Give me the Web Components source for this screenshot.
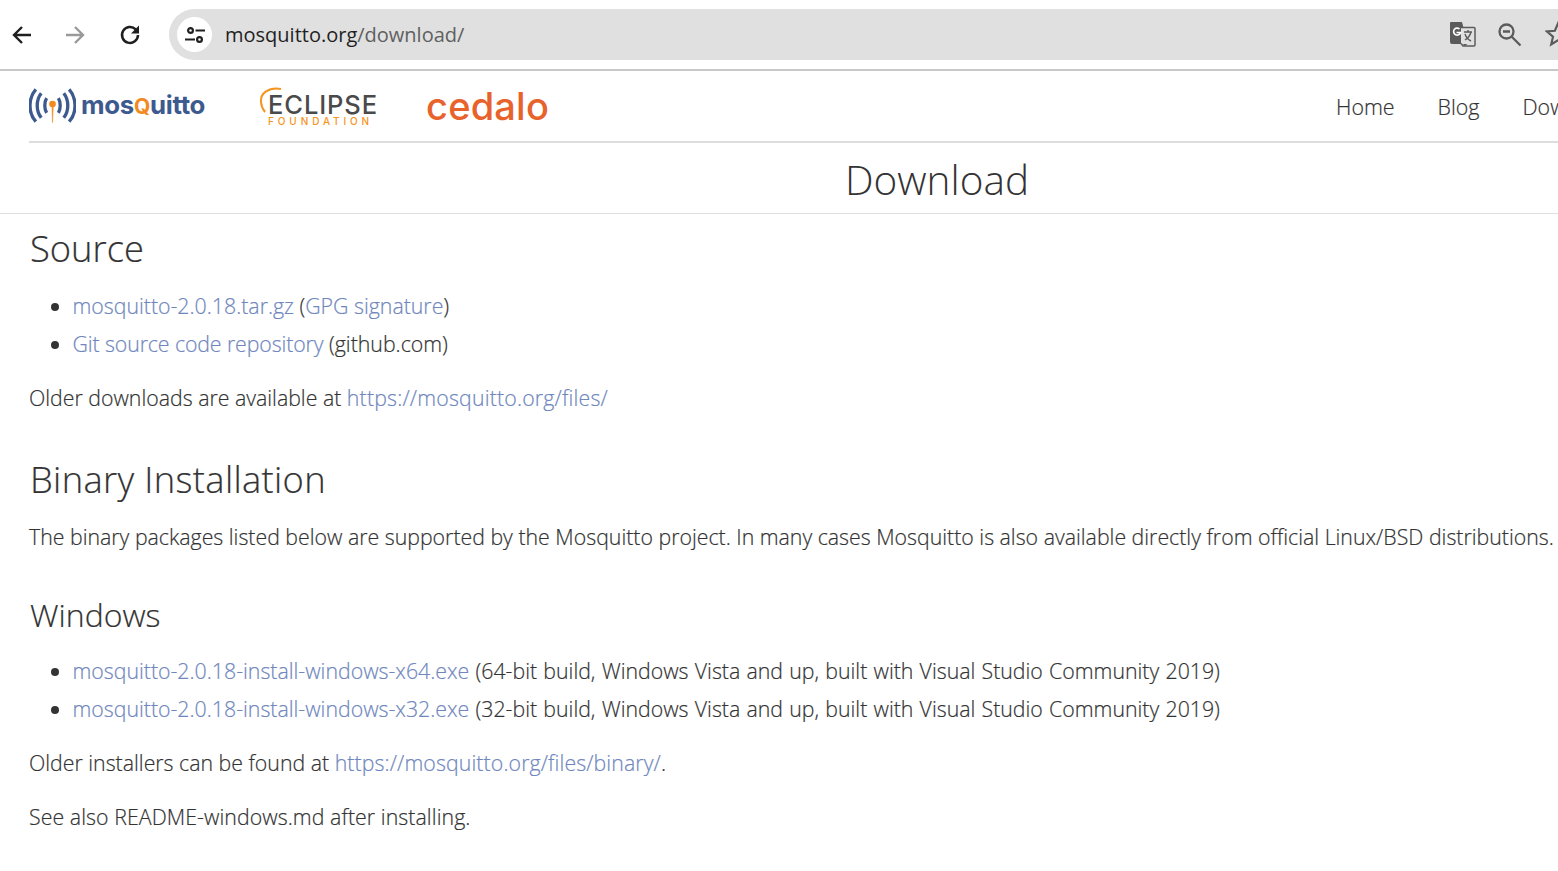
<!DOCTYPE html>
<html><head><meta charset="utf-8"><title>Download</title>
<style>
html,body{margin:0;padding:0;height:871px;overflow:hidden;background:#fff}
body{font-family:"Open Sans","Noto Sans",sans-serif;font-weight:300;color:#333}
</style></head><body>
<browser-bar></browser-bar>
<site-page>
<site-header></site-header>
<page-title>Download</page-title>
<page-content>
<h2>Source</h2>
<ul>
<li><a>mosquitto-2.0.18.tar.gz</a> (<a>GPG signature</a>)</li>
<li><a class="t">Git source code repository</a> (github.com)</li>
</ul>
<p>Older downloads are available at <a class="l">https://mosquitto.org/files/</a></p>
<h2 class="b">Binary Installation</h2>
<p class="nw">The binary packages listed below are supported by the Mosquitto project. In many cases Mosquitto is also available directly from official Linux/BSD distributions.</p>
<h3>Windows</h3>
<ul class="w">
<li><a>mosquitto-2.0.18-install-windows-x64.exe</a> (64-bit build, Windows Vista and up, built with Visual Studio Community 2019)</li>
<li><a>mosquitto-2.0.18-install-windows-x32.exe</a> (32-bit build, Windows Vista and up, built with Visual Studio Community 2019)</li>
</ul>
<p>Older installers can be found at <a class="l2">https://mosquitto.org/files/binary/</a>.</p>
<p class="s">See also README-windows.md after installing.</p>
</page-content>
</site-page>
<script>
function def(name,html){customElements.define(name,class extends HTMLElement{constructor(){super();this.attachShadow({mode:'open'}).innerHTML=html}})}
def('browser-bar',`<style>
:host{display:flex;align-items:center;height:69px;background:#fff;position:relative;overflow:hidden;width:1558px;font-family:"Open Sans",sans-serif}
.nav{display:flex;align-items:center;padding-left:10px;width:169px;box-sizing:border-box;flex:none}
.nav svg+svg{margin-left:29px}
.nav svg:last-child{margin-left:31px}
svg{display:block;flex:none}
.omni{flex:none;width:1500px;height:51px;border-radius:26px;background:#e0e0e0;display:flex;align-items:center;padding-left:8px;box-sizing:border-box}
.chip{width:35px;height:35px;border-radius:50%;background:#fff;display:flex;align-items:center;justify-content:center;flex:none}
.url{margin-left:13px;font:400 20px "Open Sans",sans-serif;color:#1f1f1f;width:1200px;flex:none}
.url span{color:#5f5f5f}
.a{position:absolute}
</style>
<div class="nav">
<svg width="24" height="24" viewBox="0 0 24 24" fill="none" stroke="#1f1f1f" stroke-width="2.400"><path d="M21 12H4M12 4l-8 8 8 8"/></svg>
<svg width="24" height="24" viewBox="0 0 24 24" fill="none" stroke="#9a9a9a" stroke-width="2.400"><path d="M3 12h17M12 4l8 8-8 8"/></svg>
<svg width="24" height="24" viewBox="0 0 24 24" fill="none" stroke="#1f1f1f" stroke-width="2.500"><path d="M20 12a8 8 0 1 1-2.300-5.700L20 8.500"/><path d="M21 2.500v8h-8z" stroke="none" fill="#1f1f1f"/></svg>
</div>
<div class="omni"><div class="chip"><svg width="24" height="24" viewBox="0 0 24 24" fill="none" stroke="#1f1f1f" stroke-width="2.200"><circle cx="7.500" cy="7.500" r="2.400"/><path d="M12.500 7.500H22M2 16.500h10"/><circle cx="16.500" cy="16.500" r="2.400"/></svg></div>
<div class="url">mosquitto.org<span>/download/</span></div></div>
<div class="a" style="left:1449px;top:21px"><svg width="27" height="27" viewBox="0 0 27 27"><path d="M1 2a1 1 0 0 1 1-1h11l6 22H3a2 2 0 0 1-2-2z" fill="#5b5b5b"/><path d="M12 6.500h13a1 1 0 0 1 1 1V24a1 1 0 0 1-1 1H14l-2-2.500" fill="#e0e0e0" stroke="#5b5b5b" stroke-width="1.500"/><path d="M14 23l1.500 2 3-2z" fill="#5b5b5b"/><path d="M15 11h8M19 9v2M22 11c-1 4-3 6-6 8M16 13c1 3 4 6 6 7" fill="none" stroke="#5b5b5b" stroke-width="1.400"/><path d="M10.500 8a3.500 3.500 0 1 0 1 3.500H7.500" fill="none" stroke="#fff" stroke-width="1.700"/></svg></div>
<div class="a" style="left:1497px;top:22px"><svg width="25" height="25" viewBox="0 0 25 25" fill="none" stroke="#5b5b5b" stroke-width="2.300"><circle cx="9.500" cy="9.500" r="7"/><path d="M6 9.500h7M14.500 14.500l9 9"/></svg></div>
<div class="a" style="left:1545px;top:21px"><svg width="27" height="27" viewBox="0 0 27 27" fill="none" stroke="#5b5b5b" stroke-width="2.200"><path d="M13 2.500l3.100 7.300 7.900.7-6 5.200 1.800 7.700-6.800-4.100-6.800 4.100 1.800-7.700-6-5.200 7.900-.7z"/></svg></div>`);
def('site-page',`<style>:host{display:block;width:1874px;border-top:2px solid #c8c8c8}</style><slot></slot>`);
def('site-header',`<style>
:host{display:flex;align-items:center;height:70px;margin-left:29px;border-bottom:2px solid #ddd;position:relative}
.m{display:flex;align-items:center;width:230px;flex:none}
.mt{font:700 25.800px "Inter","Open Sans",sans-serif;color:#3d5a8f;letter-spacing:-.3px;margin-left:5px;margin-top:-3px}
.mt i{font-style:normal;color:#f38a1f;font-size:21px}
.e{width:167px;flex:none;position:relative;height:50px}
.e b{position:absolute;left:9px;top:14px;font:500 25.500px/20px "Inter",sans-serif;color:#4a4a4a;letter-spacing:.9px}
.e s{position:absolute;left:9px;top:35px;font:500 10px/11px "Inter",sans-serif;color:#f7941e;letter-spacing:3.900px;text-decoration:none}
.e svg{position:absolute;left:0;top:6px}
.c{font:500 38px "Inter","Open Sans",sans-serif;color:#e8622c;letter-spacing:.2px;flex:none}
nav{position:absolute;left:1307px;top:21px;display:flex;gap:43px;font:300 21.400px/30px "Open Sans",sans-serif;color:#333;-webkit-text-stroke:.2px}
</style>
<div class="m"><svg width="47" height="36" viewBox="0 0 48 36" fill="none" stroke="#3d5a8f" stroke-width="3.400"><path d="M7 1c-8 9-8 24 0 33M12.500 5c-5.500 7-5.500 18 0 25M18 10c-2.500 4-2.500 11 0 15M41 1c8 9 8 24 0 33M35.500 5c5.500 7 5.500 18 0 25M30 10c2.500 4 2.500 11 0 15"/><circle cx="24" cy="16" r="3.400" fill="#f38a1f" stroke="none"/><path d="M23.500 18l.5 17 .8-17z" fill="#f38a1f" stroke="#f38a1f" stroke-width=".6"/></svg><span class="mt">mos<i>Q</i>uitto</span></div>
<div class="e"><svg width="30" height="30" viewBox="0 0 30 30" fill="none" stroke="#f7941e" stroke-width="2"><path d="M22 2C10 0 1 6 2 15c.3 4 1.500 7 4 10"/></svg><b>ECLIPSE</b><s>FOUNDATION</s></div>
<div class="c">cedalo</div>
<nav><span>Home</span><span>Blog</span><span>Download</span></nav>`);
def('page-title',`<style>:host{display:block;height:70px;border-bottom:1px solid #e0e0e0;text-align:center;font:300 40.500px/74px "Open Sans",sans-serif;color:#333}</style><slot></slot>`);
def('page-content',`<style>
:host{display:block;padding-left:29px;font:300 21.300px/38px "Open Sans",sans-serif;color:#333;-webkit-text-stroke:.2px}
</style><slot></slot>`);
</script>
<style>
page-content h2{font-weight:300;font-size:36.300px;line-height:50px;margin:9px 0 14px;padding-left:1px}
page-content h2.b{margin:37px 0 14px;letter-spacing:.35px}
page-content h3{font-weight:300;font-size:32px;line-height:44px;margin:37px 0 15px;padding-left:1px}
page-content ul{margin:0 0 16px;padding:0 0 0 43.500px}
page-content ul.w{word-spacing:.7px}
page-content p{margin:0 0 16px}
page-content p.s{letter-spacing:.07px}
page-content .nw{white-space:nowrap}
page-content a{color:#7087bd}
page-content a.t{letter-spacing:-.1px}
page-content a.l{letter-spacing:.18px}
page-content a.l2{letter-spacing:.1px}
</style>
</body></html>
